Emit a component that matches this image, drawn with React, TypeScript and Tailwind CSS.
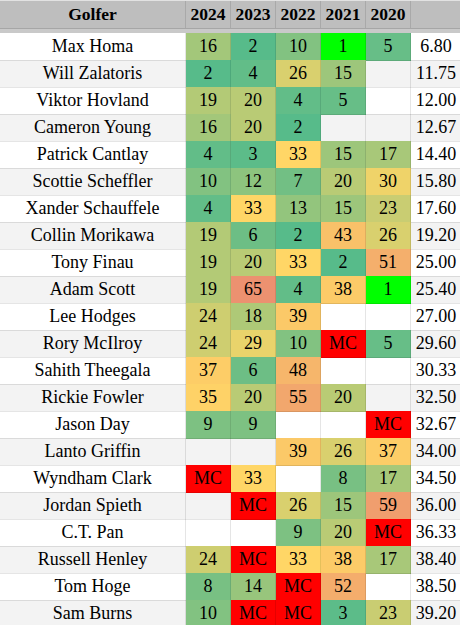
import React from "react";

type Result = number | "MC" | null;

const golfers: { name: string; results: Result[]; avg: string }[] = [
  { name: "Max Homa", results: [16, 2, 10, 1, 5], avg: "6.80" },
  { name: "Will Zalatoris", results: [2, 4, 26, 15, null], avg: "11.75" },
  { name: "Viktor Hovland", results: [19, 20, 4, 5, null], avg: "12.00" },
  { name: "Cameron Young", results: [16, 20, 2, null, null], avg: "12.67" },
  { name: "Patrick Cantlay", results: [4, 3, 33, 15, 17], avg: "14.40" },
  { name: "Scottie Scheffler", results: [10, 12, 7, 20, 30], avg: "15.80" },
  { name: "Xander Schauffele", results: [4, 33, 13, 15, 23], avg: "17.60" },
  { name: "Collin Morikawa", results: [19, 6, 2, 43, 26], avg: "19.20" },
  { name: "Tony Finau", results: [19, 20, 33, 2, 51], avg: "25.00" },
  { name: "Adam Scott", results: [19, 65, 4, 38, 1], avg: "25.40" },
  { name: "Lee Hodges", results: [24, 18, 39, null, null], avg: "27.00" },
  { name: "Rory McIlroy", results: [24, 29, 10, "MC", 5], avg: "29.60" },
  { name: "Sahith Theegala", results: [37, 6, 48, null, null], avg: "30.33" },
  { name: "Rickie Fowler", results: [35, 20, 55, 20, null], avg: "32.50" },
  { name: "Jason Day", results: [9, 9, null, null, "MC"], avg: "32.67" },
  { name: "Lanto Griffin", results: [null, null, 39, 26, 37], avg: "34.00" },
  { name: "Wyndham Clark", results: ["MC", 33, null, 8, 17], avg: "34.50" },
  { name: "Jordan Spieth", results: [null, "MC", 26, 15, 59], avg: "36.00" },
  { name: "C.T. Pan", results: [null, null, 9, 20, "MC"], avg: "36.33" },
  { name: "Russell Henley", results: [24, "MC", 33, 38, 17], avg: "38.40" },
  { name: "Tom Hoge", results: [8, 14, "MC", 52, null], avg: "38.50" },
  { name: "Sam Burns", results: [10, "MC", "MC", 3, 23], avg: "39.20" },
];

const years = ["2024", "2023", "2022", "2021", "2020"];

// green -> yellow -> red colour scale, like a spreadsheet's conditional format
const GREEN = [87, 187, 138];
const YELLOW = [255, 214, 102];
const RED = [230, 124, 115];

function mix(a: number[], b: number[], t: number) {
  const c = a.map((v, i) => Math.round(v + (b[i] - v) * t));
  return `rgb(${c[0]}, ${c[1]}, ${c[2]})`;
}

function cellColor(r: Result): string | undefined {
  if (r === null) return undefined;
  if (r === "MC") return "#ff0000";
  if (r === 1) return "#00ff00";
  if (r <= 33) return mix(GREEN, YELLOW, Math.max(0, (r - 2) / 31));
  return mix(YELLOW, RED, Math.min(1, (r - 33) / 42));
}

export default function App() {
  return (
    <div className="w-[460px] h-[625px] overflow-hidden bg-white [font-family:'Liberation_Serif',serif] text-black">
      <div className="w-[461px]">
        {/* Header */}
        <div className="grid grid-cols-[186px_45px_45px_45px_45px_45px_50px] h-[29px] border-t border-b border-t-[#e2e2e2] border-b-[#a6a6a6] bg-[#bebebe] text-[17.5px] font-bold">
          <div className="flex items-center justify-center border-r border-[#a9a9a9]">Golfer</div>
          {years.map((y) => (
            <div key={y} className="flex items-center justify-center border-r border-[#a9a9a9]">
              {y}
            </div>
          ))}
          <div />
        </div>
        <div className="h-1 bg-[#c9c9c9]" />

        {/* Rows */}
        {golfers.map((g, i) => (
          <div
            key={g.name}
            className={`grid grid-cols-[186px_45px_45px_45px_45px_45px_50px] h-[27px] text-[18px] ${
              i % 2 === 0 ? "bg-white" : "bg-[#f3f3f3]"
            }`}
          >
            <div className="flex items-center justify-center border-r border-b border-black/10 whitespace-nowrap">
              {g.name}
            </div>
            {g.results.map((r, j) => (
              <div
                key={j}
                className="flex items-center justify-center border-r border-b border-black/10"
                style={{ backgroundColor: cellColor(r) }}
              >
                {r ?? ""}
              </div>
            ))}
            <div className="flex items-center justify-center border-b border-black/10">{g.avg}</div>
          </div>
        ))}
      </div>
    </div>
  );
}
